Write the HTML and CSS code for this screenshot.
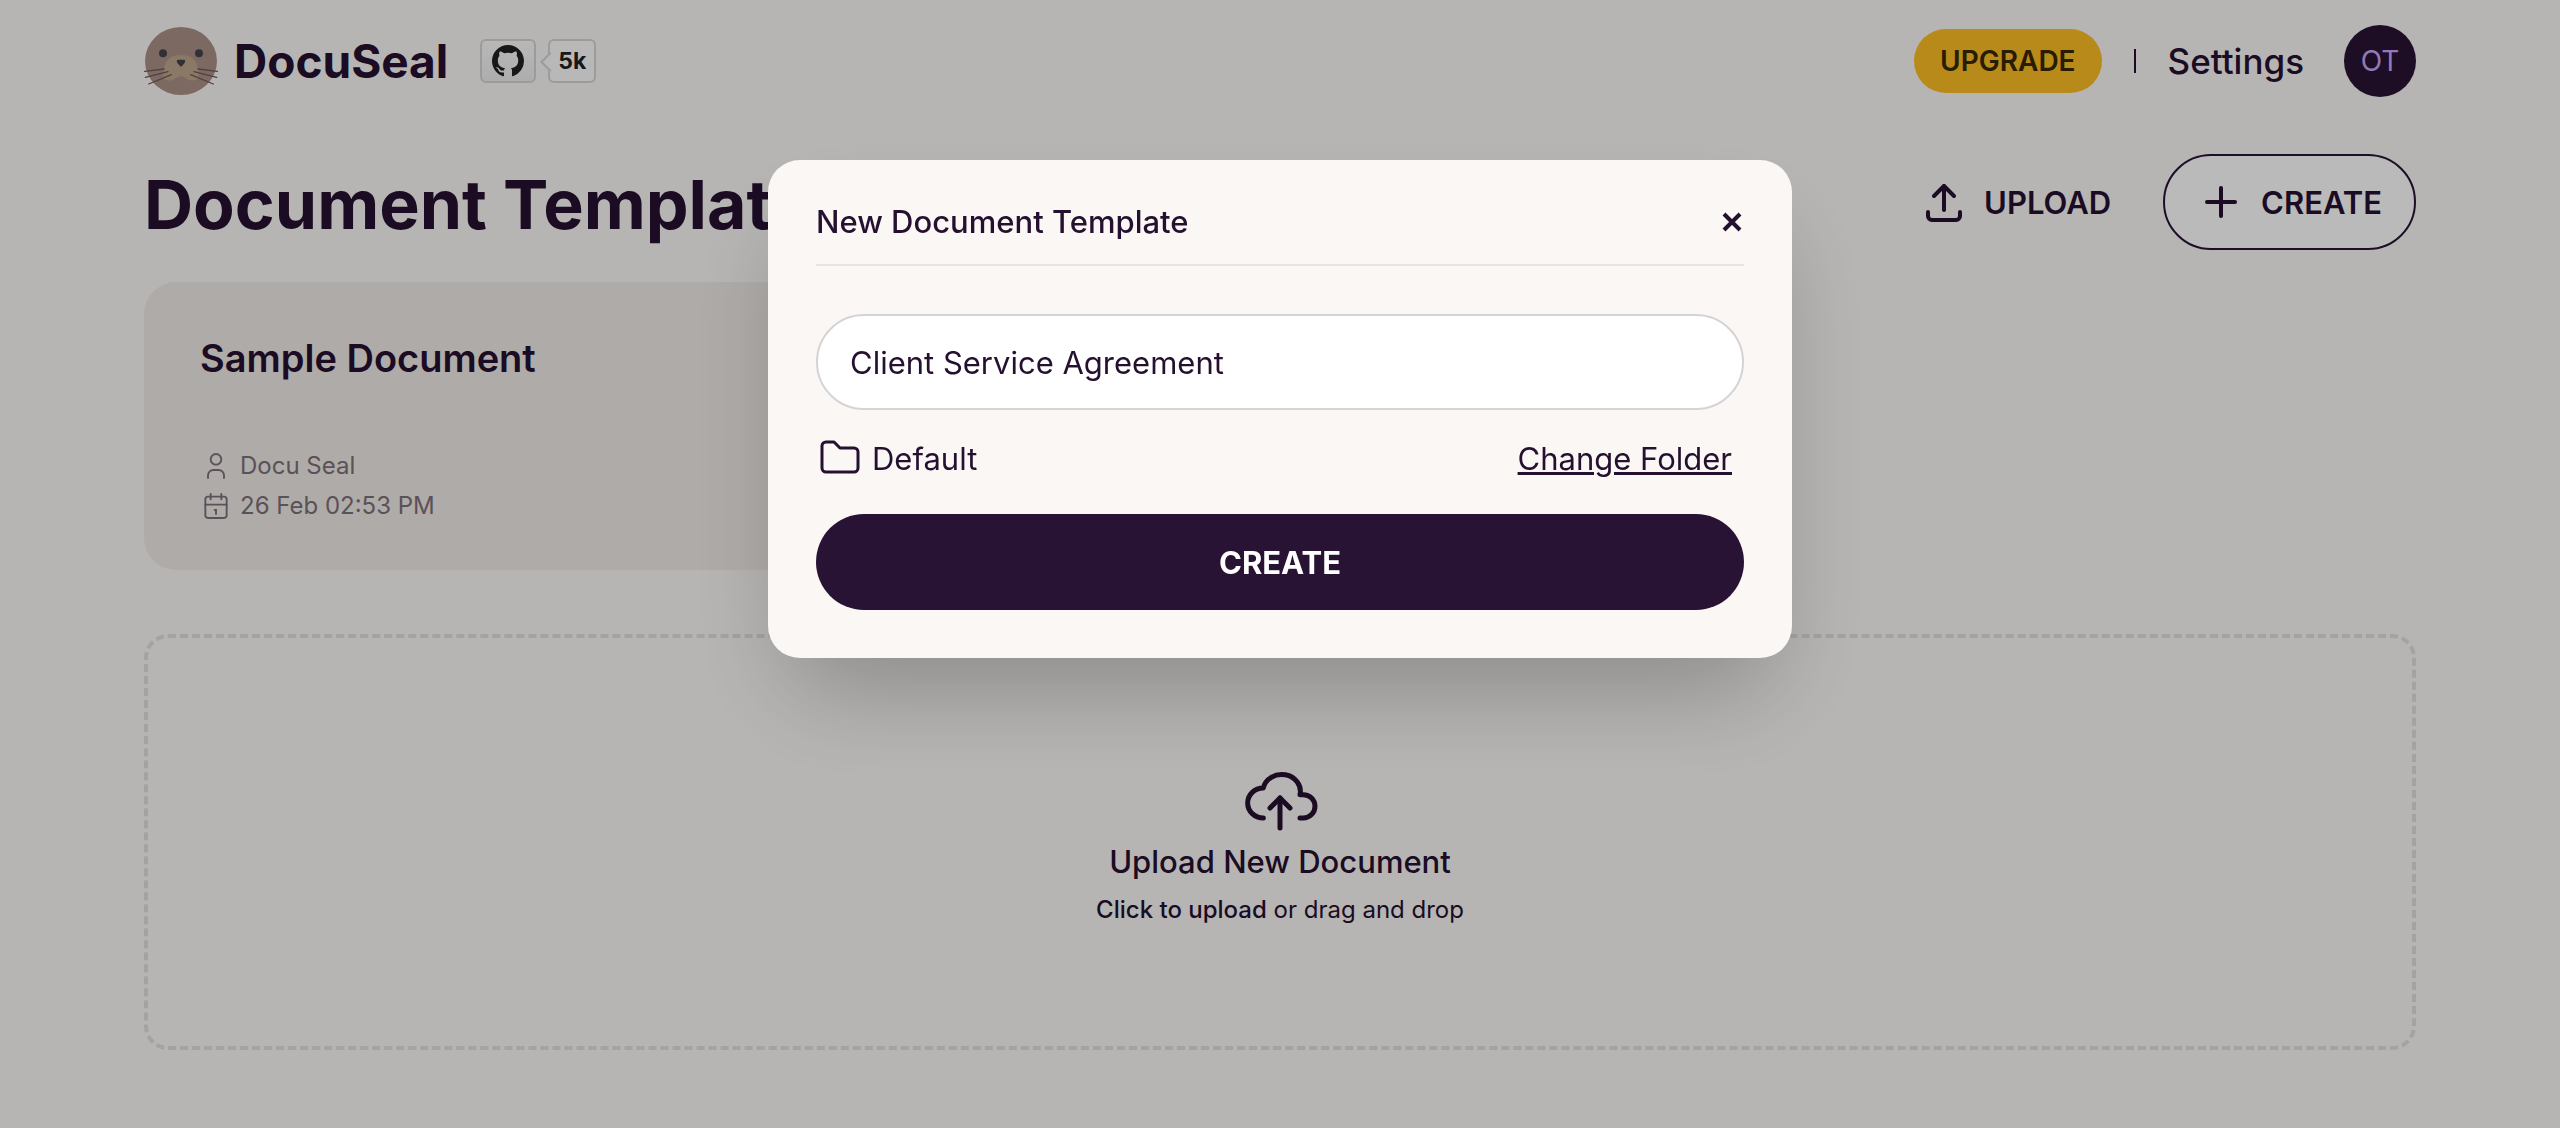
FILE: index.html
```html
<!DOCTYPE html>
<html lang="en">
<head>
    <meta charset="UTF-8">
    <meta name="viewport" content="width=device-width, initial-scale=1.0">
    <title>DocuSeal</title>
    <link rel="stylesheet" href="styles.css">
</head>
<body>
    <div class="page">
        <header class="navbar">
            <div class="brand">
                <a href="#" class="brand-link">
                    <svg class="logo" viewBox="42 36 222 204" aria-hidden="true">
                        <ellipse cx="153" cy="138" rx="108" ry="102" fill="#a99187"/>
                        <path d="M153 120c-26 0-44 12-49 32-3 14-7 24-4 34 4 12 22 14 34 6 8-6 14-8 19-8s11 2 19 8c12 8 30 6 34-6 3-10-1-20-4-34-5-20-23-32-49-32z" fill="#bda68e"/>
                        <circle cx="99" cy="115" r="12" fill="#43434b"/>
                        <circle cx="207" cy="115" r="12" fill="#43434b"/>
                        <path d="M145 134h16c5 0 6 5 3 9l-7 9c-2 3-6 3-8 0l-7-9c-3-4-2-9 3-9z" fill="#43434b"/>
                        <g stroke="#6f5957" stroke-width="4" stroke-linecap="round">
                            <path d="M44 169l58-7M46 187l68-17M56 207l68-28M262 169l-58-7M260 187l-68-17M250 207l-68-28"/>
                        </g>
                    </svg>
                    <span>DocuSeal</span>
                </a>
                <a href="#" class="github">
                    <span class="github-mark">
                        <svg width="32" height="32" viewBox="0 0 16 16" fill="currentColor" role="img" aria-label="GitHub"><path d="M8 0C3.58 0 0 3.58 0 8c0 3.54 2.29 6.53 5.47 7.59.4.07.55-.17.55-.38 0-.19-.01-.82-.01-1.49-2.01.37-2.53-.49-2.69-.94-.09-.23-.48-.94-.82-1.13-.28-.15-.68-.52-.01-.53.63-.01 1.08.58 1.23.82.72 1.21 1.87.87 2.33.66.07-.52.28-.87.51-1.07-1.78-.2-3.64-.89-3.64-3.95 0-.87.31-1.59.82-2.15-.08-.2-.36-1.02.08-2.12 0 0 .67-.21 2.2.82.64-.18 1.32-.27 2-.27s1.36.09 2 .27c1.53-1.04 2.2-.82 2.2-.82.44 1.1.16 1.92.08 2.12.51.56.82 1.27.82 2.15 0 3.07-1.87 3.75-3.65 3.95.29.25.54.73.54 1.48 0 1.07-.01 1.93-.01 2.2 0 .21.15.46.55.38A8.01 8.01 0 0 0 16 8c0-4.42-3.58-8-8-8z"/></svg>
                    </span>
                    <span class="github-count">5k</span>
                </a>
            </div>
            <nav class="menu">
                <a href="#" class="upgrade">UPGRADE</a>
                <span class="separator"></span>
                <a href="#" class="settings">Settings</a>
                <button type="button" class="avatar">OT</button>
            </nav>
        </header>

        <main>
            <div class="title-row">
                <h1>Document Templates</h1>
                <div class="actions">
                    <button type="button" class="btn">
                        <svg class="icon" viewBox="0 0 24 24"><path d="M4 17v2a2 2 0 0 0 2 2h12a2 2 0 0 0 2-2v-2"/><path d="M7 9l5-5l5 5"/><path d="M12 4v12"/></svg>
                        <span>UPLOAD</span>
                    </button>
                    <button type="button" class="btn btn-outline">
                        <svg class="icon" viewBox="0 0 24 24"><path d="M12 5v14"/><path d="M5 12h14"/></svg>
                        <span>CREATE</span>
                    </button>
                </div>
            </div>

            <div class="templates">
                <a href="#" class="card">
                    <h2>Sample Document</h2>
                    <div class="meta">
                        <p>
                            <svg class="icon icon-sm" viewBox="0 0 24 24"><circle cx="12" cy="7" r="4"/><path d="M6 21v-2a4 4 0 0 1 4-4h4a4 4 0 0 1 4 4v2"/></svg>
                            <span>Docu Seal</span>
                        </p>
                        <p>
                            <svg class="icon icon-sm" viewBox="0 0 24 24"><rect x="4" y="5" width="16" height="16" rx="2"/><path d="M16 3v4"/><path d="M8 3v4"/><path d="M4 11h16"/><path d="M11 15h1"/><path d="M12 15v3"/></svg>
                            <span>26 Feb 02:53 PM</span>
                        </p>
                    </div>
                </a>
            </div>

            <label class="dropzone">
                <svg class="icon icon-lg" viewBox="0 0 24 24"><path d="M7 18a4.6 4.4 0 0 1 0-9a5 4.5 0 0 1 11 2h1a3.5 3.5 0 0 1 0 7h-1"/><path d="M9 15l3-3l3 3"/><path d="M12 12v9"/></svg>
                <span class="dropzone-title">Upload New Document</span>
                <span class="dropzone-hint"><b>Click to upload</b> or drag and drop</span>
                <input type="file" hidden>
            </label>
        </main>
    </div>

    <div class="overlay">
        <div class="modal" role="dialog" aria-labelledby="modal-title">
            <div class="modal-header">
                <h3 id="modal-title">New Document Template</h3>
                <button type="button" class="close" aria-label="Close">
                    <svg width="24" height="24" viewBox="0 0 24 24"><path d="M4 4l16 16M20 4l-16 16"/></svg>
                </button>
            </div>
            <form class="modal-form">
                <input type="text" class="name-input" value="Client Service Agreement" aria-label="Document name">
                <div class="folder-row">
                    <span class="folder">
                        <svg class="icon icon-folder" viewBox="0 0 24 24"><path d="M5 4h4l3 3h7a2 2 0 0 1 2 2v8a2 2 0 0 1-2 2h-14a2 2 0 0 1-2-2v-11a2 2 0 0 1 2-2"/></svg>
                        <span>Default</span>
                    </span>
                    <a href="#" class="change-folder">Change Folder</a>
                </div>
                <button type="button" class="submit">CREATE</button>
            </form>
        </div>
    </div>
</body>
</html>
```

FILE: styles.css
```css
* {
    box-sizing: border-box;
}
body {
    margin: 0;
    min-height: 100vh;
    background-color: #faf8f6;
    color: #261030;
    font-family: Inter, "Liberation Sans", sans-serif;
    font-size: 31px;
}
a {
    color: inherit;
    text-decoration: none;
}
h1, h2, h3, p {
    margin: 0;
}
button {
    font: inherit;
    color: inherit;
    border: none;
    background: none;
    padding: 0;
    cursor: pointer;
}
.page {
    max-width: 2560px;
    margin: 0 auto;
    padding: 0 144px;
}

/* Navbar */
.navbar {
    display: flex;
    align-items: center;
    justify-content: space-between;
    height: 122px;
}
.brand, .brand-link, .github, .menu {
    display: flex;
    align-items: center;
}
.brand {
    gap: 32px;
}
.brand-link {
    gap: 16px;
    font-size: 46px;
    font-weight: 700;
}
.logo {
    width: 74px;
    height: 68px;
}
.github {
    gap: 12px;
    font-size: 23px;
    font-weight: 700;
    color: #222222;
}
.github-mark, .github-count {
    display: flex;
    align-items: center;
    height: 44px;
    border: 2px solid #d5d5d5;
    border-radius: 6px;
}
.github-mark {
    padding: 0 10px;
    background: linear-gradient(#fcfcfc, #eeeeee);
}
.github-count {
    position: relative;
    padding: 0 8px;
    background-color: #fcfcfc;
}
/* Arrow on the left side of the counter */
.github-count::before {
    content: "";
    position: absolute;
    left: -7px;
    top: 14px;
    width: 12px;
    height: 12px;
    border-left: 2px solid #d5d5d5;
    border-bottom: 2px solid #d5d5d5;
    background-color: #fcfcfc;
    transform: rotate(45deg);
}
.menu {
    gap: 32px;
}
.upgrade {
    padding: 0 26px;
    border-radius: 32px;
    background-color: #fbbd23;
    color: #382800;
    font-size: 28px;
    font-weight: 600;
    line-height: 64px;
}
.separator {
    width: 2px;
    height: 24px;
    background-color: #261030;
}
.settings {
    margin-right: 8px;
    font-size: 35px;
    font-weight: 500;
}
.avatar {
    width: 72px;
    height: 72px;
    border-radius: 50%;
    background-color: #291334;
    color: #c8a8f7;
    font-size: 28px;
}

/* Templates */
.title-row {
    display: flex;
    align-items: center;
    justify-content: space-between;
    margin: 32px 0;
}
h1 {
    padding-top: 4px;
    font-size: 68px;
    font-weight: 700;
    line-height: 80px;
}
.actions {
    display: flex;
    gap: 18px;
}
.btn {
    display: flex;
    align-items: center;
    gap: 16px;
    height: 96px;
    padding: 0 32px;
    border: 2px solid transparent;
    border-radius: 48px;
    font-weight: 600;
}
.btn-outline {
    border-color: #291334;
    background-color: #fff;
}
.icon {
    width: 48px;
    height: 48px;
    fill: none;
    stroke: currentColor;
    stroke-width: 2;
    stroke-linecap: round;
    stroke-linejoin: round;
}
.icon-sm {
    width: 32px;
    height: 32px;
    stroke-width: 1.4;
}
.icon-lg {
    width: 80px;
    height: 80px;
    stroke-width: 1.5;
}
.icon-folder {
    stroke-width: 1.5;
}
.templates {
    display: grid;
    grid-template-columns: repeat(3, 1fr);
    gap: 32px;
}
.card {
    display: flex;
    flex-direction: column;
    gap: 64px;
    padding: 48px 56px;
    border-radius: 32px;
    background-color: #f0ebe7;
}
.card h2 {
    font-size: 38px;
    font-weight: 600;
    line-height: 56px;
}
.meta {
    display: flex;
    flex-direction: column;
    gap: 8px;
    color: #7d7079;
    font-size: 24px;
}
.meta p {
    display: flex;
    align-items: center;
    gap: 8px;
    line-height: 32px;
}
.dropzone {
    display: flex;
    flex-direction: column;
    align-items: center;
    justify-content: center;
    height: 416px;
    margin: 64px 0;
    border: 4px dashed #e2dfde;
    border-radius: 24px;
    cursor: pointer;
}
.dropzone-title {
    margin-bottom: 8px;
    font-weight: 500;
    line-height: 48px;
}
.dropzone-hint {
    font-size: 24px;
    line-height: 32px;
}
.dropzone-hint b {
    font-weight: 500;
}

/* Modal */
.overlay {
    position: fixed;
    top: 0;
    left: 0;
    width: 100%;
    height: 100%;
    padding-top: 160px;
    background-color: rgba(0, 0, 0, 0.272);
}
.modal {
    width: 100%;
    max-width: 1024px;
    margin: 0 auto;
    padding: 34px 48px 48px;
    border-radius: 32px;
    background-color: #faf7f5;
    box-shadow: 0 50px 100px -24px rgba(0, 0, 0, 0.25);
}
.modal-header {
    display: flex;
    align-items: center;
    justify-content: space-between;
    padding-bottom: 14px;
    border-bottom: 2px solid #e6e4e4;
}
.modal-header h3 {
    font-size: 31px;
    font-weight: 500;
    line-height: 56px;
}
.close {
    display: flex;
}
.close path {
    stroke: currentColor;
    stroke-width: 4;
}
.modal-form {
    display: flex;
    flex-direction: column;
    gap: 24px;
    margin-top: 48px;
}
.name-input {
    width: 100%;
    height: 96px;
    padding: 0 32px;
    border: 2px solid #d6d3d4;
    border-radius: 48px;
    background-color: #fff;
    color: inherit;
    font: inherit;
    outline: none;
}
.folder-row {
    display: flex;
    align-items: center;
    justify-content: space-between;
    padding: 0 12px 8px 0;
}
.folder {
    display: flex;
    align-items: center;
    gap: 8px;
}
.change-folder {
    text-decoration: underline;
    text-decoration-thickness: 3px;
}
.submit {
    height: 96px;
    border-radius: 48px;
    background-color: #291334;
    color: #fff;
    font-weight: 700;
}
```
